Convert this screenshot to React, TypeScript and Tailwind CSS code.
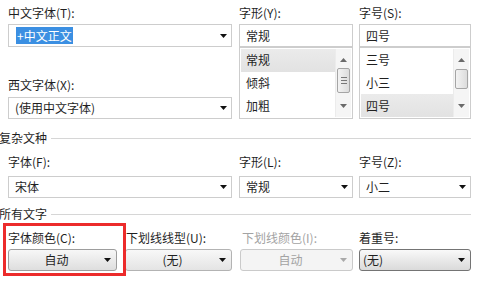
import React from "react";

// small filled triangle used by combo boxes and buttons
const Arrow = ({ disabled }: { disabled?: boolean }) => (
  <svg width="7" height="4" viewBox="0 0 7 4" className="shrink-0">
    <path d="M0 0h7L3.5 4z" fill={disabled ? "#a9a9a9" : "#111"} />
  </svg>
);

const Label = ({ text, className = "", disabled }: { text: string; className?: string; disabled?: boolean }) => (
  <div className={`h-[14px] whitespace-nowrap text-[12px] leading-[14px] ${disabled ? "text-[#a3a3a3]" : "text-[#1f1f1f]"} ${className}`}>
    {text}
  </div>
);

const Combo = ({ children, className = "" }: { children: React.ReactNode; className?: string }) => (
  <div className={`flex items-center justify-between border border-[#cdcdcd] bg-white pl-[6px] pr-[4px] text-[12px] text-[#1f1f1f] ${className}`}>
    <span className="leading-[16px]">{children}</span>
    <Arrow />
  </div>
);

const ScrollBar = ({ thumbTop, thumbH, grip }: { thumbTop: number; thumbH: number; grip?: boolean }) => (
  <div className="relative my-px mr-px w-[16px] border-l border-[#ececec] bg-[#f5f5f5]">
    <svg width="7" height="4" viewBox="0 0 7 4" className="absolute left-[4px] top-[9px]">
      <path d="M3.5 0L7 4H0z" fill="#6a6a6a" />
    </svg>
    <div
      className="absolute left-[1px] right-[1px] flex flex-col items-center justify-center gap-[2px] rounded-[2px] border border-[#a5a5a5] bg-linear-to-r from-[#f3f3f3] to-[#dcdcdc]"
      style={{ top: thumbTop, height: thumbH }}
    >
      {grip && (
        <>
          <div className="h-px w-[6px] bg-[#777]" />
          <div className="h-px w-[6px] bg-[#777]" />
          <div className="h-px w-[6px] bg-[#777]" />
        </>
      )}
    </div>
    <svg width="7" height="4" viewBox="0 0 7 4" className="absolute bottom-[9px] left-[4px]">
      <path d="M0 0h7L3.5 4z" fill="#6a6a6a" />
    </svg>
  </div>
);

const ListBox = ({
  items,
  selected,
  thumbTop,
  thumbH,
  grip,
}: {
  items: string[];
  selected: number;
  thumbTop: number;
  thumbH: number;
  grip?: boolean;
}) => (
  <div className="flex h-[72px] border border-[#cdcdcd] bg-white">
    <div className="flex flex-1 flex-col py-px pl-px">
      {items.map((it, i) => (
        <div
          key={it}
          className={`flex h-[23.3px] items-center pl-[5px] text-[12px] text-[#1f1f1f] ${i === selected ? "bg-linear-to-b from-[#ebebeb] to-[#e2e2e2]" : ""}`}
        >
          {it}
        </div>
      ))}
    </div>
    <ScrollBar thumbTop={thumbTop} thumbH={thumbH} grip={grip} />
  </div>
);

const Section = ({ title, className = "" }: { title: string; className?: string }) => (
  <div className={`flex h-4 items-center ${className}`}>
    <span className="-ml-[1px] text-[12px] leading-[14px] text-[#1f1f1f]">{title}</span>
    <div className="ml-[4px] mr-[10px] h-px flex-1 bg-[#d6d6d6]" />
  </div>
);

const Button = ({
  text,
  className = "",
  variant = "normal",
  align = "center",
}: {
  text: string;
  className?: string;
  variant?: "normal" | "light" | "disabled" | "strong";
  align?: "center" | "left";
}) => {
  const look = {
    normal: "border-[#9d9d9d] bg-linear-to-b from-[#f7f7f7] to-[#dedede] text-[#1f1f1f]",
    light: "border-[#b3b3b3] bg-linear-to-b from-[#f8f8f8] to-[#e4e4e4] text-[#1f1f1f]",
    disabled: "border-[#cacaca] bg-[#f4f4f4] text-[#a3a3a3]",
    strong: "border-[#747474] bg-linear-to-b from-[#f9f9f9] to-[#dadada] text-[#1f1f1f]",
  }[variant];
  return (
    <div className={`flex h-[22px] items-center rounded-[3px] border pr-[5px] text-[12px] ${look} ${className}`}>
      <span className={`flex-1 leading-[16px] ${align === "center" ? "text-center" : "pl-[3px]"}`}>{text}</span>
      <Arrow disabled={variant === "disabled"} />
    </div>
  );
};

export default function App() {
  return (
    <div className="relative h-[281px] w-[481px] overflow-hidden bg-white font-['Noto_Sans_CJK_SC',sans-serif]">
      {/* 上部：中文 / 西文字体 + 字形 + 字号 */}
      <div className="flex pl-2">
        <div className="w-[224px]">
          <Label text="中文字体(T):" className="mb-[4px] mt-[6px]" />
          <Combo className="h-[23px]">
            <span className="ml-[1px] bg-[#3b8fe2] px-px text-white">+中文正文</span>
          </Combo>
          <Label text="西文字体(X):" className="mt-[31px]" />
          <Combo className="mt-[5px] h-[22px]">(使用中文字体)</Combo>
        </div>
        <div className="ml-[7px] w-[114px]">
          <Label text="字形(Y):" className="mb-[4px] mt-[6px]" />
          <div className="flex h-[23px] items-center border border-[#cdcdcd] bg-white pl-[6px] text-[12px] text-[#1f1f1f]">常规</div>
          <ListBox items={["常规", "倾斜", "加粗"]} selected={0} thumbTop={19} thumbH={25} grip />
        </div>
        <div className="ml-[6px] w-[112px]">
          <Label text="字号(S):" className="mb-[4px] mt-[6px]" />
          <div className="flex h-[23px] items-center border border-[#cdcdcd] bg-white pl-[6px] text-[12px] text-[#1f1f1f]">四号</div>
          <ListBox items={["三号", "小三", "四号"]} selected={2} thumbTop={20} thumbH={20} />
        </div>
      </div>

      {/* 复杂文种 */}
      <Section title="复杂文种" className="mt-[11px]" />
      <div className="flex pl-2">
        <div className="w-[224px]">
          <Label text="字体(F):" className="mt-[9px]" />
          <Combo className="mt-[7px] h-[22px]">宋体</Combo>
        </div>
        <div className="ml-[7px] w-[114px]">
          <Label text="字形(L):" className="mt-[9px]" />
          <Combo className="mt-[7px] h-[22px]">常规</Combo>
        </div>
        <div className="ml-[6px] w-[112px]">
          <Label text="字号(Z):" className="mt-[9px]" />
          <Combo className="mt-[7px] h-[22px]">小二</Combo>
        </div>
      </div>

      {/* 所有文字 */}
      <Section title="所有文字" className="mt-[8px]" />
      <div className="flex pl-2">
        <div className="w-[109px]">
          <Label text="字体颜色(C):" className="mt-[9px]" />
          <Button text="自动" className="mt-[4px]" />
        </div>
        <div className="ml-[8px] w-[107px]">
          <Label text="下划线线型(U):" className="ml-px mt-[9px]" />
          <Button text="(无)" variant="light" className="mt-[4px]" />
        </div>
        <div className="ml-[8px] w-[113px]">
          <Label text="下划线颜色(I):" disabled className="ml-[2px] mt-[9px]" />
          <Button text="自动" variant="disabled" className="mt-[4px]" />
        </div>
        <div className="ml-[6px] w-[112px]">
          <Label text="着重号:" className="mt-[9px]" />
          <Button text="(无)" variant="strong" align="left" className="mt-[4px]" />
        </div>
      </div>

      {/* 红色标注框 */}
      <div className="pointer-events-none absolute left-[3px] top-[223px] h-[53px] w-[123px] border-[3px] border-[#ec2b2b]" />
    </div>
  );
}
